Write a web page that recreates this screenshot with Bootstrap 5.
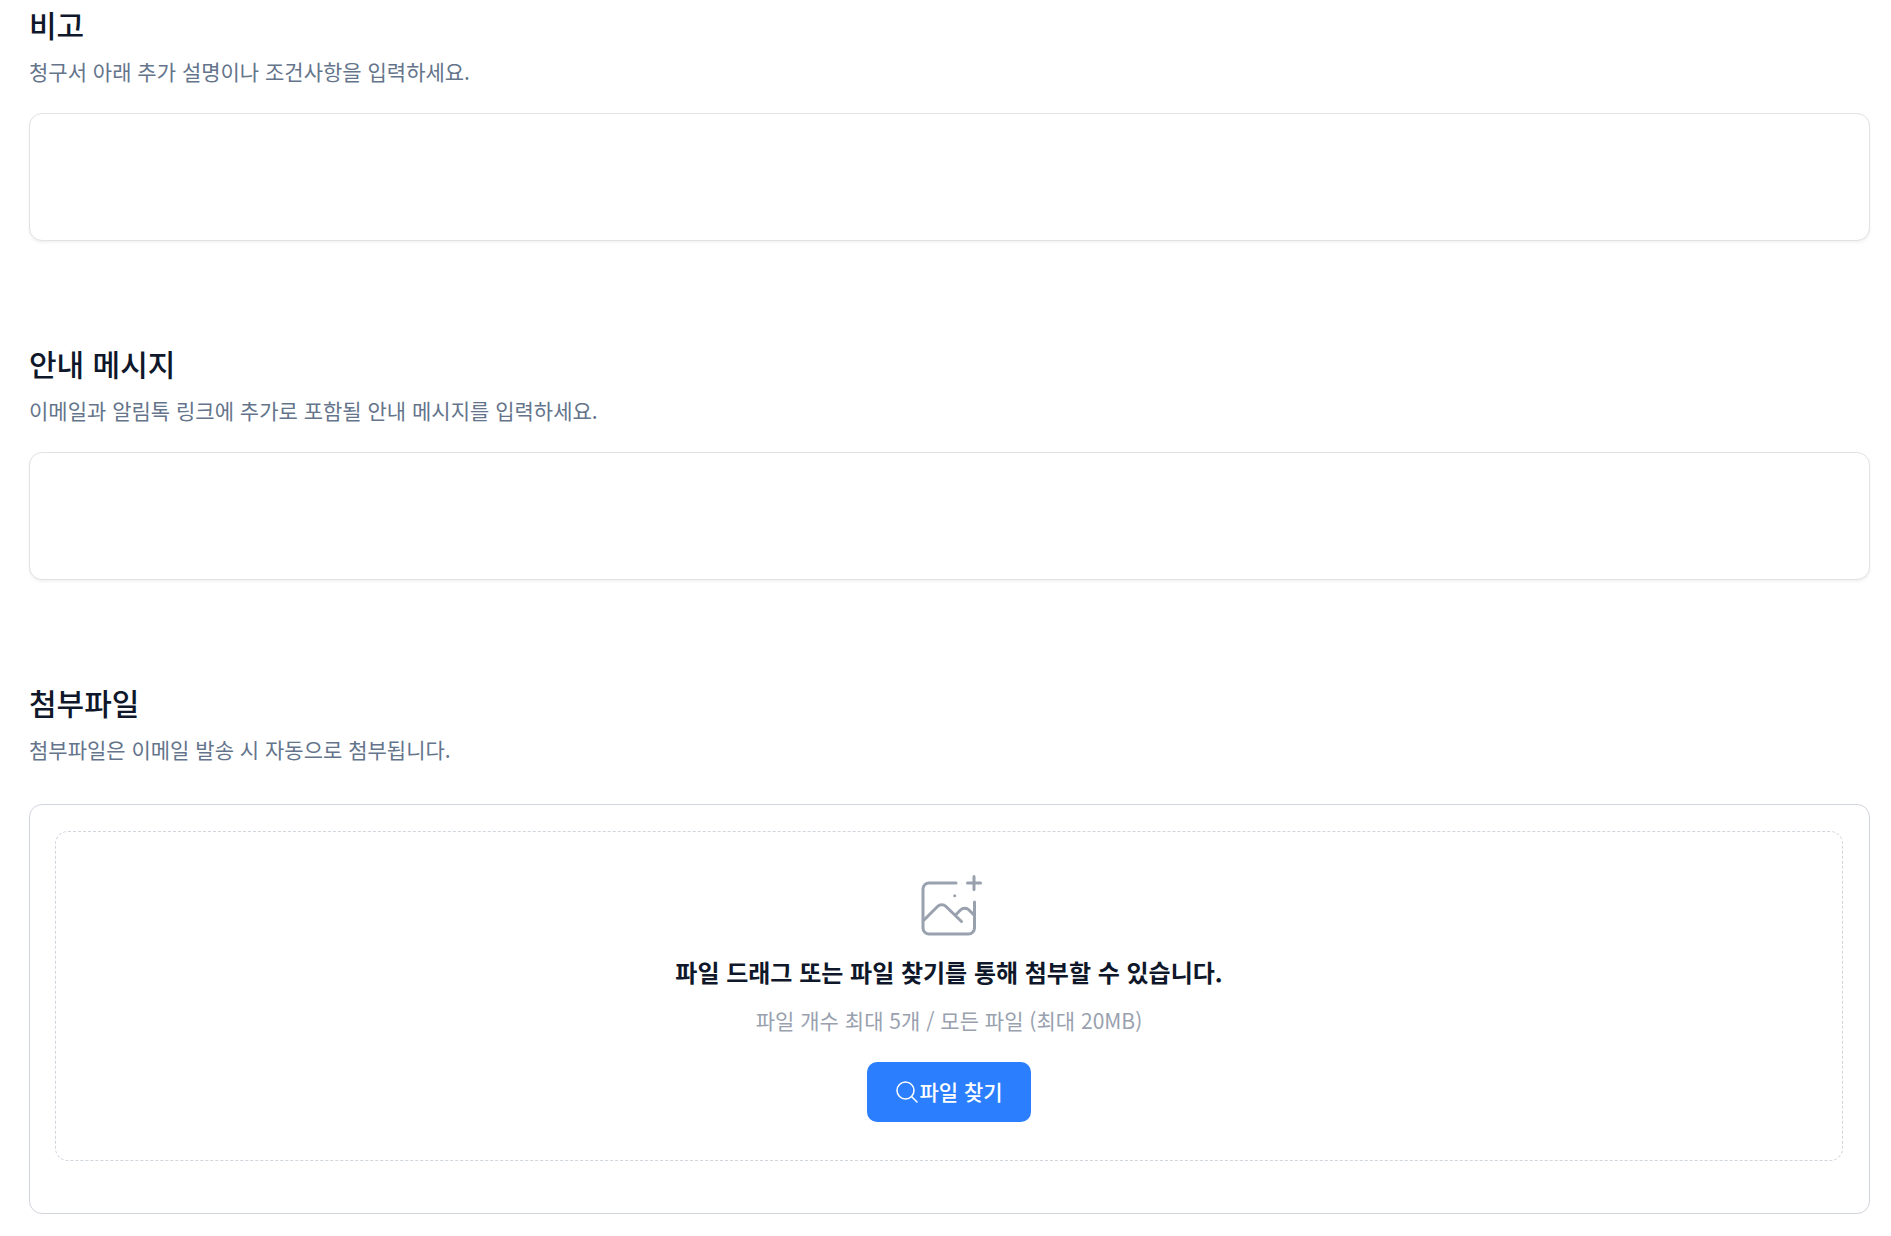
<!DOCTYPE html>
<html lang="ko">
<head>
<meta charset="utf-8">
<meta name="viewport" content="width=device-width, initial-scale=1">
<title>청구서 작성</title>
<link href="https://cdn.jsdelivr.net/npm/bootstrap@5.3.0/dist/css/bootstrap.min.css" rel="stylesheet">
<style>
  body { font-family: "Noto Sans CJK KR", sans-serif; color: #0f172a; background: #fff; }
  .invoice-form { padding: 6px 21px 22px 29px; }
  .form-block { margin-bottom: 104px; }
  .form-block:last-child { margin-bottom: 0; }
  .block-title { font-size: 30px; line-height: 36px; font-weight: 500; margin-bottom: 13px; }
  .block-desc { font-size: 21px; line-height: 32px; color: #64748b; margin-bottom: 26px; }
  .note-input { height: 128px; border-color: #e2e2e4; border-radius: 13px; resize: none; box-shadow: 0 2px 3px rgba(0, 0, 0, .05); }
  .upload-panel { margin-top: 39px; padding: 26px 26px 52px 25px; border: 1px solid #d1d5dc; border-radius: 13px; }
  .drop-area { padding: 40px 24px 38px; border: 1px dashed #d1d5dc; border-radius: 13px; }
  .drop-icon { width: 68px; height: 64px; color: #99a1af; margin-bottom: 18px; }
  .drop-title { font-size: 24px; line-height: 36px; font-weight: 700; margin-bottom: 14px; }
  .drop-hint { font-size: 21px; line-height: 32px; color: #99a1af; margin-bottom: 26px; }
  .btn-find { height: 60px; padding: 0 28px; font-size: 21px; font-weight: 500; border: 0; border-radius: 10px;
    --bs-btn-bg: #2b7fff; --bs-btn-hover-bg: #1f6fe8; }
  .btn-find svg { width: 24px; height: 24px; }
</style>
</head>
<body>
<main class="invoice-form container-fluid">
  <section class="form-block">
    <h2 class="block-title"><label for="remarks">비고</label></h2>
    <p class="block-desc" id="remarks-desc">청구서 아래 추가 설명이나 조건사항을 입력하세요.</p>
    <textarea class="form-control note-input" id="remarks" aria-describedby="remarks-desc"></textarea>
  </section>

  <section class="form-block">
    <h2 class="block-title"><label for="message">안내 메시지</label></h2>
    <p class="block-desc" id="message-desc">이메일과 알림톡 링크에 추가로 포함될 안내 메시지를 입력하세요.</p>
    <textarea class="form-control note-input" id="message" aria-describedby="message-desc"></textarea>
  </section>

  <section class="form-block">
    <h2 class="block-title">첨부파일</h2>
    <p class="block-desc">첨부파일은 이메일 발송 시 자동으로 첨부됩니다.</p>
    <div class="upload-panel">
      <div class="drop-area d-flex flex-column align-items-center text-center">
        <svg class="drop-icon" viewBox="1 0 68 64" fill="none" stroke="currentColor" stroke-width="3" stroke-linecap="round" stroke-linejoin="round" aria-hidden="true">
          <path d="M42 11H15a6 6 0 0 0-6 6v39a6 6 0 0 0 6 6h39.500a6 6 0 0 0 6-6V30"/>
          <path d="M10 48 23.500 34.500a6 6 0 0 1 8.500 0L47.500 49.500"/>
          <path d="m42 42.500 4.500-4.500a6 6 0 0 1 8.500 0l5 5"/>
          <path d="M60 4.500v13M53.500 11h13"/>
          <path d="M40.700 23.700h.01"/>
        </svg>
        <p class="drop-title">파일 드래그 또는 파일 찾기를 통해 첨부할 수 있습니다.</p>
        <p class="drop-hint">파일 개수 최대 5개 / 모든 파일 (최대 20MB)</p>
        <button type="button" class="btn btn-primary btn-find d-inline-flex align-items-center">
          <svg viewBox="0 0 24 24" fill="none" stroke="currentColor" stroke-width="1.500" stroke-linecap="round" aria-hidden="true">
            <circle cx="10.500" cy="10.500" r="8.500"/><path d="m16.500 16.500 5.500 5.500"/>
          </svg>
          <span>파일 찾기</span>
        </button>
      </div>
    </div>
  </section>
</main>
<script src="https://cdn.jsdelivr.net/npm/bootstrap@5.3.0/dist/js/bootstrap.bundle.min.js"></script>
</body>
</html>
